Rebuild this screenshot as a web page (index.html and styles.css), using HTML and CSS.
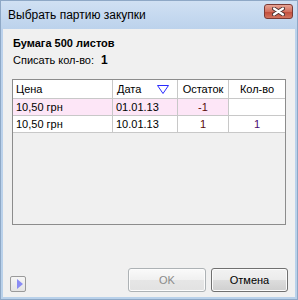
FILE: index.html
```html
<!DOCTYPE html>
<html lang="ru">
<head>
  <meta charset="UTF-8" />
  <title>Выбрать партию закупки</title>
  <link rel="stylesheet" href="styles.css">
</head>
<body>
  <div class="window">
    <div class="titlebar">
      <span class="title">Выбрать партию закупки</span>
      <button class="close" type="button">
        <svg width="13" height="9" viewBox="0 0 13 9">
          <path d="M2 1.5 L11 7.5 M11 1.5 L2 7.5" stroke="#4a3030" stroke-width="4" stroke-linecap="round"/>
          <path d="M2 1.5 L11 7.5 M11 1.5 L2 7.5" stroke="#fff" stroke-width="2.2" stroke-linecap="round"/>
        </svg>
      </button>
    </div>
    <div class="client">
      <div class="product">Бумага 500 листов</div>
      <div class="writeoff">Списать кол-во: <b>1</b></div>

      <div class="grid">
        <div class="row head">
          <div class="cell">Цена</div>
          <div class="cell date">Дата
            <svg class="sort" width="12" height="9" viewBox="0 0 12 9">
              <path d="M0.5 0.5 H11.5 L6 8.5 Z" fill="#fff" stroke="#2a2aff" stroke-width="1"/>
            </svg>
          </div>
          <div class="cell center">Остаток</div>
          <div class="cell center">Кол-во</div>
        </div>
        <div class="row picked">
          <div class="cell">10,50 грн</div>
          <div class="cell">01.01.13</div>
          <div class="cell center rest">-1</div>
          <div class="cell center qty plain"></div>
        </div>
        <div class="row">
          <div class="cell">10,50 грн</div>
          <div class="cell">10.01.13</div>
          <div class="cell center rest">1</div>
          <div class="cell center qty">1</div>
        </div>
      </div>

      <div class="footer">
        <button class="expander" type="button">
          <svg width="6" height="10" viewBox="0 0 6 10"><path d="M0 0 L6 5 L0 10 Z" fill="#8a8cf5"/></svg>
        </button>
        <button class="btn" type="button" disabled>OK</button>
        <button class="btn" type="button">Отмена</button>
      </div>
    </div>
  </div>
</body>
</html>
```

FILE: styles.css
```css
body {
  margin: 0;
  background: #fff;
  font-family: "Liberation Sans", Arial, sans-serif;
  color: #000;
}
.window {
  width: 298px;
  height: 300px;
  box-sizing: border-box;
  display: flex;
  flex-direction: column;
  border: 1px solid #8ea8c6;
  padding: 0 2px 2px;
  background: linear-gradient(#d0e0f3, #bcd2ec 28px, #b9d1ea);
}
.titlebar {
  height: 28px;
  display: flex;
  padding-left: 5px;
}
.title {
  font-size: 12px;
  line-height: 28px;
}
.close {
  margin: 3px 2px 0 auto;
  width: 29px;
  height: 15px;
  padding: 0;
  border: 1px solid #7a3a35;
  border-radius: 3px;
  background: linear-gradient(#e8a494, #d3705f 50%, #c04a38 51%, #d2735f);
  display: flex;
  align-items: center;
  justify-content: center;
}
.client {
  flex: 1;
  background: #f0f0f0;
  padding: 7px 7px 5px 9px;
  display: flex;
  flex-direction: column;
  font-size: 11px;
}
.product {
  font-weight: bold;
  line-height: 14px;
  padding-left: 1px;
}
.writeoff {
  margin-top: 3px;
  line-height: 14px;
  padding-left: 1px;
}
.writeoff b {
  margin-left: 4px;
  font-size: 12px;
}
.grid {
  margin-top: 12px;
  width: 274px;
  height: 146px;
  box-sizing: border-box;
  border: 1px solid #8c8c8c;
  background: #f0f0f0;
}
.row {
  display: grid;
  grid-template-columns: 100px 65px 51px 56px;
  height: 17px;
}
.row.head {
  height: 19px;
}
.cell {
  box-sizing: border-box;
  background: #fff;
  border-right: 1px solid #c8c8c8;
  border-bottom: 1px solid #c8c8c8;
  padding: 0 3px;
  line-height: 16px;
  white-space: nowrap;
  overflow: hidden;
}
.head .cell {
  line-height: 18px;
}
.cell:last-child {
  border-right: none;
}
.center {
  text-align: center;
}
.date {
  display: flex;
  align-items: center;
  padding-left: 4px;
}
.sort {
  margin-left: 16px;
}
.picked .cell {
  background: #fde6f7;
}
.picked .cell.plain {
  background: #fff;
}
.rest {
  color: #5a0a0a;
}
.qty {
  color: #4a0a70;
}
.footer {
  margin-top: auto;
  margin-left: -2px;
  display: flex;
  align-items: flex-end;
}
.expander {
  width: 16px;
  height: 16px;
  padding: 0 0 0 3px;
  border: 1px solid #9a9a9a;
  border-radius: 2px;
  background: linear-gradient(#f6f6f6, #e4e4e4);
  display: flex;
  align-items: center;
  justify-content: center;
}
.btn {
  height: 24px;
  width: 78px;
  font-family: "Liberation Sans", Arial, sans-serif;
  font-size: 11px;
  color: #000;
  border: 1px solid #707070;
  border-radius: 3px;
  background: linear-gradient(#f2f2f2, #ebebeb 50%, #dddddd 50%, #cfcfcf);
  box-shadow: inset 0 0 0 1px #fcfcfc;
}
.btn:disabled {
  margin-left: auto;
  color: #8a8a8a;
  border-color: #adb2b5;
  background: linear-gradient(#fafafa, #f0f0f0 50%, #e6e6e6 50%, #e2e2e2);
}
.btn + .btn {
  margin-left: 5px;
  width: 77px;
}
```
